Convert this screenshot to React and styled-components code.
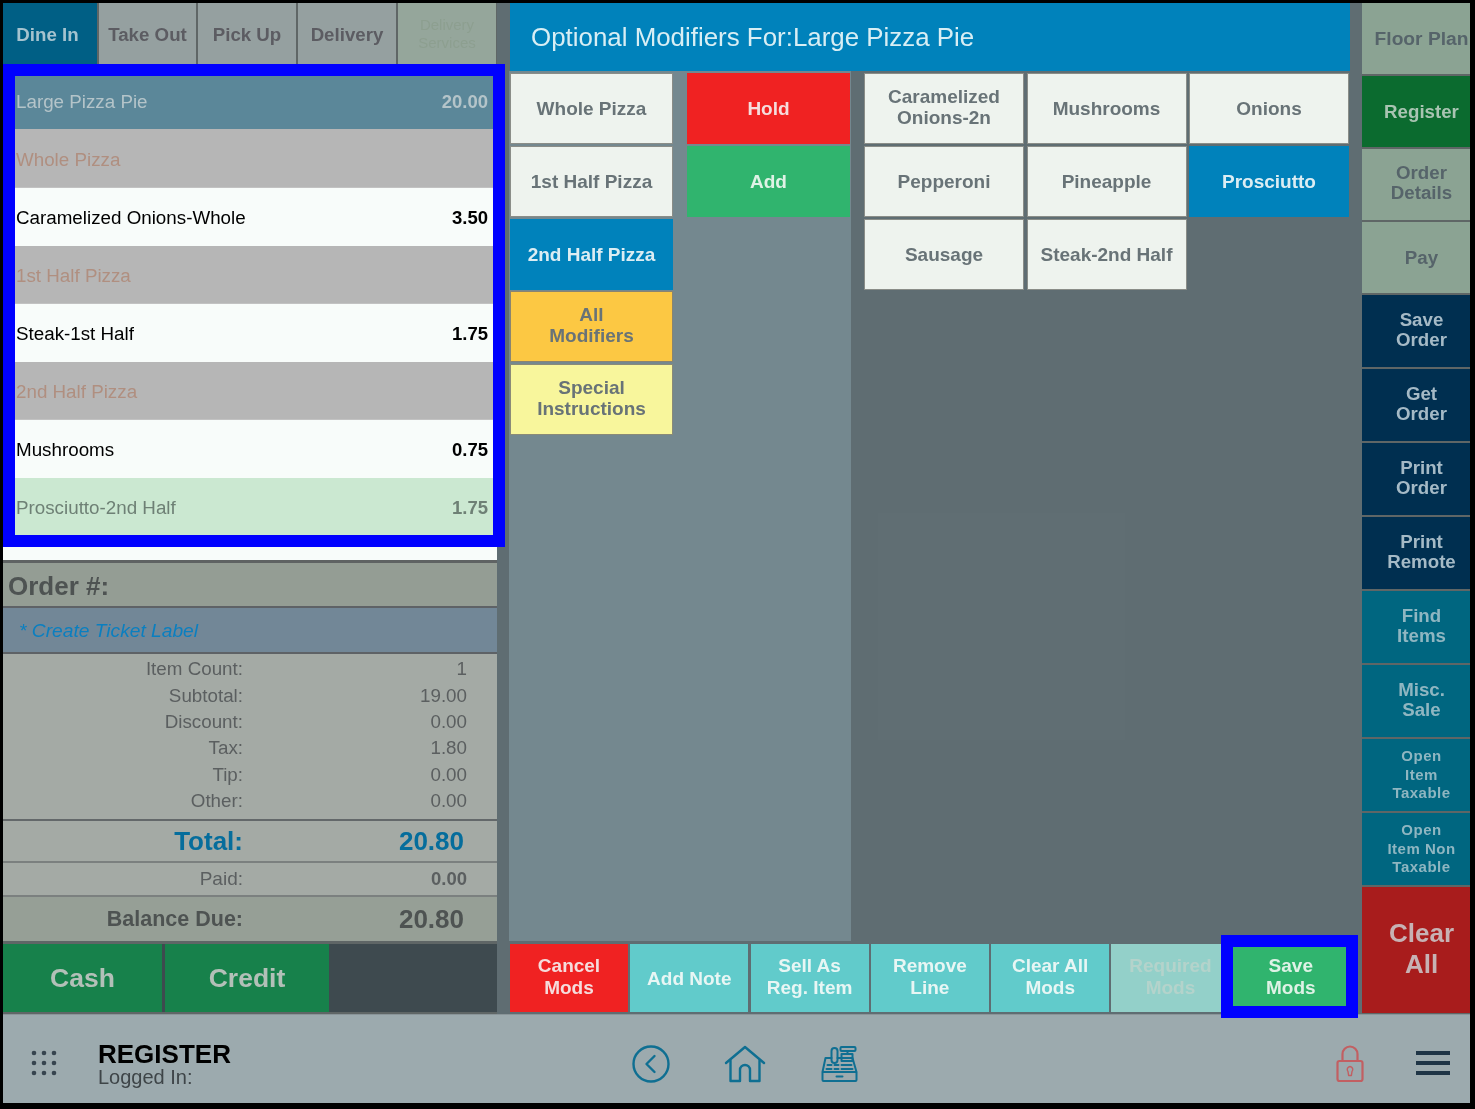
import styled, { createGlobalStyle, css } from "styled-components";

const GlobalStyle = createGlobalStyle`
  html, body {
    margin: 0;
    padding: 0;
    background: #000;
  }
  body {
    font-family: "Liberation Sans", Arial, sans-serif;
  }
  * {
    box-sizing: border-box;
  }
`;

// the whole capture is a bit soft, the highlight frames are not
const soft = css`
  filter: blur(0.45px);
`;

const Screen = styled.div`
  width: 1475px;
  height: 1109px;
  padding: 3px 5px 6px 3px;
  background: #000;
  overflow: hidden;
`;

const Frame = styled.div`
  display: flex;
  flex-direction: column;
  height: 1100px;
`;

const Main = styled.div`
  display: flex;
  height: 1011px;
`;

/* left column */
const LeftCol = styled.div`
  position: relative;
  display: flex;
  flex-direction: column;
  flex: 0 0 494px;
  background: #5f6666;
  z-index: 1;
`;

const Tabs = styled.div`
  display: flex;
  height: 61px;
  gap: 2px;
  background: #5f6666;
`;

const Tab = styled.div`
  flex: 0 0 ${(p) => p.$width || "98px"};
  display: flex;
  align-items: center;
  justify-content: center;
  text-align: center;
  padding-top: ${(p) => (p.$faint ? "0" : "3px")};
  padding-right: ${(p) => (p.$active ? "5px" : "0")};
  font-size: ${(p) => (p.$faint ? "15px" : "18.7px")};
  font-weight: ${(p) => (p.$faint ? 400 : 700)};
  line-height: 18px;
  background: ${(p) => (p.$active ? "#005f85" : p.$faint ? "#95a69b" : "#95a0a0")};
  color: ${(p) => (p.$active ? "#a5c3cf" : p.$faint ? "#8d9f90" : "#5c5c62")};
  ${soft}
`;

const OrderList = styled.div`
  height: 499px;
  padding-top: 12px;
  background: #f8fcfa;
  border-bottom: 3px solid #5f6363;
`;

const ListRow = styled.div`
  display: flex;
  align-items: center;
  justify-content: space-between;
  height: ${(p) => (p.$kind === "head" ? "53px" : p.$kind === "section" && p.$first ? "59px" : "58px")};
  padding: ${(p) => (p.$kind === "head" ? "0" : "3px")} 9px 0 13px;
  font-size: 18.8px;
  border-bottom: 1px solid ${(p) => (p.$kind === "section" ? "#c2c2c2" : "transparent")};
  background: ${(p) =>
    ({ head: "#5b8799", section: "#b6b6b6", sent: "#cbe8d1", item: "#f8fcfa" }[p.$kind])};
  color: ${(p) =>
    ({ head: "#b4c4c9", section: "#b08f80", sent: "#6e8075", item: "#000" }[p.$kind])};
  ${soft}
`;

const Amount = styled.span`
  font-size: 18.5px;
  font-weight: 700;
`;

const BlueFrame = styled.div`
  position: absolute;
  left: 0;
  top: 61px;
  width: 502px;
  height: 483px;
  border: 12px solid #0000ff;
  pointer-events: none;
`;

const OrderNumber = styled.div`
  height: 45px;
  padding: 4px 0 0 5px;
  display: flex;
  align-items: center;
  font-size: 26px;
  font-weight: 700;
  color: #4e5352;
  background: #949d94;
  border-bottom: 2px solid #5e6266;
  ${soft}
`;

const TicketLabel = styled.div`
  height: 46px;
  padding: 2px 0 0 16px;
  display: flex;
  align-items: center;
  font-size: 19.2px;
  font-style: italic;
  color: #0a7fc0;
  background: #728797;
  border-bottom: 2px solid #5e6266;
  ${soft}
`;

const Summary = styled.div`
  height: 167px;
  padding-top: 2px;
  background: #a4aaa5;
  border-bottom: 2px solid #63686a;
  ${soft}
`;

const Line = styled.div`
  display: grid;
  grid-template-columns: 240px 224px;
  align-items: center;
  height: ${(p) => p.$height || "26.4px"};
  font-size: ${(p) => p.$size || "18.8px"};
  font-weight: ${(p) => (p.$bold ? 700 : 400)};
  color: ${(p) => p.$color || "#5b5f60"};
  background: ${(p) => p.$bg || "transparent"};
  border-bottom: ${(p) => (p.$rule ? "2px solid #7b807f" : "none")};
  span {
    text-align: right;
  }
  ${(p) => p.$bg && soft}
`;

const Figure = styled.span`
  padding-right: 3px;
  font-size: ${(p) => p.$size || "26px"};
  font-weight: 700;
`;

const PaidValue = styled.span`
  font-size: 18.5px;
  font-weight: 700;
`;

const Pay = styled.div`
  display: flex;
  gap: 3px;
  height: 68px;
  margin-top: 3px;
  background: #3e4a4f;
`;

const PayButton = styled.div`
  flex: 0 0 ${(p) => p.$width};
  display: flex;
  align-items: center;
  justify-content: center;
  font-size: 26.5px;
  font-weight: 700;
  color: #b3c0b8;
  background: #17814b;
  ${soft}
`;

/* centre */
const Center = styled.div`
  flex: 0 0 865px;
  display: flex;
  flex-direction: column;
  padding: 0 12px 2px 12px;
  background: #5f6d72;
`;

const Header = styled.div`
  flex: 0 0 68px;
  margin-left: 1px;
  padding-left: 21px;
  display: flex;
  align-items: center;
  font-size: 25.9px;
  color: #d8eef4;
  background: #0082bb;
  ${soft}
`;

const Body = styled.div`
  flex: 1;
  position: relative;
  display: flex;
  padding-bottom: 3px;
`;

const GhostPatch = styled.div`
  position: absolute;
  left: 369px;
  top: 442px;
  width: 247px;
  height: 227px;
  background: rgba(255, 255, 255, 0.012);
`;

const ModPanel = styled.div`
  flex: 0 0 342px;
  display: grid;
  grid-template-columns: 163px 163px;
  column-gap: 14px;
  padding: 2px 0 0 1px;
  background: #74888f;
`;

const ModColumn = styled.div`
  display: grid;
  grid-auto-rows: 71px;
  row-gap: 1.75px;
`;

const ItemGrid = styled.div`
  display: grid;
  grid-template-columns: repeat(3, 160px);
  grid-auto-rows: 71px;
  column-gap: 2.5px;
  row-gap: 1.75px;
  align-content: start;
  padding: 2px 0 0 13px;
`;

const tones = {
  plain: { bg: "#eef3ee", fg: "#687377", edge: "#8a8d88" },
  red: { bg: "#f02222", fg: "#f5dcdc", edge: "#f02222" },
  green: { bg: "#30b46e", fg: "#dff2e6", edge: "#30b46e" },
  blue: { bg: "#0082bb", fg: "#dcedf3", edge: "#0082bb" },
  amber: { bg: "#fcc843", fg: "#687377", edge: "#8a8470" },
  yellow: { bg: "#f8f69c", fg: "#687377", edge: "#8a8a78" },
  teal: { bg: "#61cbcb", fg: "#e8f6f4", edge: "#61cbcb" },
  muted: { bg: "#93d0c9", fg: "#b4d3cb", edge: "#93d0c9" },
};

const ModButton = styled.div`
  display: flex;
  align-items: center;
  justify-content: center;
  text-align: center;
  white-space: pre-line;
  padding: ${(p) => (p.$stacked ? "0 0 3px" : "1px 0 0")};
  font-size: 19px;
  font-weight: 700;
  line-height: 21.5px;
  color: ${(p) => tones[p.$tone || "plain"].fg};
  background: ${(p) => tones[p.$tone || "plain"].bg};
  border: 1px solid ${(p) => tones[p.$tone || "plain"].edge};
  ${soft}
`;

const ActionBar = styled.div`
  position: relative;
  flex: 0 0 68px;
  margin-left: 1px;
  display: grid;
  grid-template-columns: repeat(7, 118px);
  column-gap: 2.3px;
  z-index: 2;
`;

const ActionButton = styled(ModButton)`
  border: 0;
`;

const SaveFrame = styled.div`
  position: absolute;
  left: 711px;
  top: -9px;
  width: 137px;
  height: 83px;
  border: 12px solid #0000ff;
  pointer-events: none;
`;

/* right column */
const RightCol = styled.div`
  flex: 0 0 108px;
  display: grid;
  grid-template-rows: repeat(4, 71px) repeat(8, 72px) 1fr;
  row-gap: 2px;
  padding-bottom: 1px;
  background: #5f6666;
`;

const sideTones = {
  sage: { bg: "#8ba393", fg: "#56646a" },
  green: { bg: "#0b6b2f", fg: "#a9c4b2" },
  navy: { bg: "#002f50", fg: "#a5bac6" },
  teal: { bg: "#006680", fg: "#8fb6c1" },
  red: { bg: "#a81c1c", fg: "#c7b2b4" },
};

const SideButton = styled.div`
  display: flex;
  align-items: center;
  justify-content: center;
  text-align: center;
  white-space: pre;
  overflow: hidden;
  padding: 0 0 ${(p) => p.$lift || "0"} 11px;
  font-size: ${(p) => p.$size || "18.7px"};
  font-weight: 700;
  line-height: ${(p) => p.$leading || "20px"};
  letter-spacing: ${(p) => p.$track || "0"};
  color: ${(p) => sideTones[p.$tone].fg};
  background: ${(p) => sideTones[p.$tone].bg};
  ${soft}
`;

/* bottom bar */
const BottomBar = styled.div`
  flex: 1;
  display: flex;
  align-items: center;
  padding: 10px 0 0 28px;
  background: #9caaae;
  border-top: 1px solid #8a9599;
  ${soft}
`;

const Dots = styled.svg`
  flex: 0 0 26px;
  height: 26px;
  margin-top: -2px;
  fill: #36444f;
`;

const Title = styled.div`
  margin-left: 41px;
  width: 534px;
`;

const TitleMain = styled.div`
  font-size: 26px;
  font-weight: 700;
  line-height: 26px;
  color: #000;
`;

const TitleSub = styled.div`
  font-size: 20px;
  line-height: 20px;
  color: #3e4548;
`;

const Nav = styled.div`
  display: flex;
  align-items: center;
  gap: 54px;
`;

const NavIcon = styled.svg`
  display: block;
  fill: none;
  stroke: ${(p) => p.$stroke || "#0f6f92"};
  stroke-width: ${(p) => p.$weight || 2.4};
  stroke-linecap: round;
  stroke-linejoin: round;
`;

const Spacer = styled.div`
  flex: 1;
`;

const Burger = styled.div`
  display: flex;
  flex-direction: column;
  gap: 6px;
  width: 34px;
  margin: -2px 20px 0 52px;
  span {
    height: 4px;
    background: #1f3546;
  }
`;

const modColumnOne = [
  ["Whole Pizza"],
  ["1st Half Pizza"],
  ["2nd Half Pizza", "blue"],
  ["All\nModifiers", "amber"],
  ["Special\nInstructions", "yellow"],
];

const items = [
  ["Caramelized\nOnions-2n"],
  ["Mushrooms"],
  ["Onions"],
  ["Pepperoni"],
  ["Pineapple"],
  ["Prosciutto", "blue"],
  ["Sausage"],
  ["Steak-2nd Half"],
];

const actions = [
  ["Cancel\nMods", "red"],
  ["Add Note", "teal"],
  ["Sell As\nReg. Item", "teal"],
  ["Remove\nLine", "teal"],
  ["Clear All\nMods", "teal"],
  ["Required\nMods", "muted"],
  ["Save\nMods", "green"],
];

const side = [
  ["Floor Plan", "sage"],
  ["Register", "green"],
  ["Order\nDetails", "sage"],
  ["Pay", "sage"],
  ["Save\nOrder", "navy"],
  ["Get\nOrder", "navy"],
  ["Print\nOrder", "navy"],
  ["Print\nRemote", "navy"],
  ["Find\nItems", "teal"],
  ["Misc.\nSale", "teal"],
];

const orderRows = [
  ["Large Pizza Pie", "20.00", "head"],
  ["Whole Pizza", "", "section"],
  ["Caramelized Onions-Whole", "3.50", "item"],
  ["1st Half Pizza", "", "section"],
  ["Steak-1st Half", "1.75", "item"],
  ["2nd Half Pizza", "", "section"],
  ["Mushrooms", "0.75", "item"],
  ["Prosciutto-2nd Half", "1.75", "sent"],
];

const totals = [
  ["Item Count:", "1"],
  ["Subtotal:", "19.00"],
  ["Discount:", "0.00"],
  ["Tax:", "1.80"],
  ["Tip:", "0.00"],
  ["Other:", "0.00"],
];

function App() {
  return (
    <>
      <GlobalStyle />
      <Screen>
        <Frame>
          <Main>
            <LeftCol>
              <Tabs>
                <Tab $width="94px" $active>Dine In</Tab>
                <Tab $width="97px">Take Out</Tab>
                <Tab>Pick Up</Tab>
                <Tab>Delivery</Tab>
                <Tab $faint>Delivery Services</Tab>
              </Tabs>
              <OrderList>
                {orderRows.map(([name, price, kind], i) => (
                  <ListRow key={name} $kind={kind} $first={i === 1}>
                    <span>{name}</span>
                    <Amount>{price}</Amount>
                  </ListRow>
                ))}
              </OrderList>
              <OrderNumber>Order #:</OrderNumber>
              <TicketLabel>* Create Ticket Label</TicketLabel>
              <Summary>
                {totals.map(([label, value]) => (
                  <Line key={label}>
                    <span>{label}</span>
                    <span>{value}</span>
                  </Line>
                ))}
              </Summary>
              <Line $height="42px" $size="26px" $bold $color="#056d9c" $bg="#a4aaa5" $rule>
                <span>Total:</span>
                <Figure>20.80</Figure>
              </Line>
              <Line $height="34px" $size="19px" $bg="#a4aaa5" $rule>
                <span>Paid:</span>
                <PaidValue>0.00</PaidValue>
              </Line>
              <Line $height="44px" $size="21.5px" $bold $color="#4e5352" $bg="#969f96">
                <span>Balance Due:</span>
                <Figure>20.80</Figure>
              </Line>
              <Pay>
                <PayButton $width="159px">Cash</PayButton>
                <PayButton $width="164px">Credit</PayButton>
              </Pay>
              <BlueFrame />
            </LeftCol>

            <Center>
              <Header>Optional Modifiers For:Large Pizza Pie</Header>
              <Body>
                <ModPanel>
                  <ModColumn>
                    {modColumnOne.map(([label, tone]) => (
                      <ModButton key={label} $tone={tone} $stacked={label.includes("\n")}>
                        {label}
                      </ModButton>
                    ))}
                  </ModColumn>
                  <ModColumn>
                    <ModButton $tone="red">Hold</ModButton>
                    <ModButton $tone="green">Add</ModButton>
                  </ModColumn>
                </ModPanel>
                <ItemGrid>
                  {items.map(([label, tone]) => (
                    <ModButton key={label} $tone={tone} $stacked={label.includes("\n")}>
                      {label}
                    </ModButton>
                  ))}
                </ItemGrid>
                <GhostPatch />
              </Body>
              <ActionBar>
                {actions.map(([label, tone]) => (
                  <ActionButton key={label} $tone={tone} $stacked={label.includes("\n")}>
                    {label}
                  </ActionButton>
                ))}
                <SaveFrame />
              </ActionBar>
            </Center>

            <RightCol>
              {side.map(([label, tone]) => (
                <SideButton
                  key={label}
                  $tone={tone}
                  $size={label === "Floor Plan" ? "19.2px" : undefined}
                  $lift={label.includes("\n") ? "3px" : "0"}
                >
                  {label}
                </SideButton>
              ))}
              <SideButton $tone="teal" $size="15px" $leading="18.5px" $track="0.5px">
                {"Open\nItem\nTaxable"}
              </SideButton>
              <SideButton $tone="teal" $size="15px" $leading="18.5px" $track="0.5px">
                {"Open\nItem Non\nTaxable"}
              </SideButton>
              <SideButton $tone="red" $size="26px" $leading="31px" $lift="2px">
                {"Clear\nAll"}
              </SideButton>
            </RightCol>
          </Main>

          <BottomBar>
            <Dots viewBox="0 0 26 26">
              {[3, 13, 23].flatMap((y) =>
                [3, 13, 23].map((x) => <circle key={`${x}-${y}`} cx={x} cy={y} r="2.3" />)
              )}
            </Dots>
            <Title>
              <TitleMain>REGISTER</TitleMain>
              <TitleSub>Logged In:</TitleSub>
            </Title>
            <Nav>
              <NavIcon width="38" height="38" viewBox="0 0 38 38">
                <circle cx="19" cy="19" r="17.5" />
                <path d="M22.5 11 L14.5 19 L22.5 27" />
              </NavIcon>
              <NavIcon width="42" height="38" viewBox="0 0 42 38">
                <path d="M2 18 L21 2 L40 18" />
                <path d="M6.5 15.5 V36 H16 V25 a5 5 0 0 1 10 0 V36 H35.5 V15.5" />
              </NavIcon>
              <NavIcon width="38" height="38" viewBox="-1.5 0 38 38" $weight={2}>
                <rect x="1" y="27" width="34" height="9" rx="1" />
                <path d="M1 27 L4 13 H10 M16 13 H31 L35 27" />
                <rect x="10" y="3" width="6" height="15" rx="3" />
                <rect x="19" y="2" width="15" height="4" rx="1" />
                <path d="M26 6 V9" />
                <rect x="20" y="9" width="11" height="7" />
                <path d="M6 20 H10 M13 20 H17 M20 20 H30 M5 24 H10 M13 24 H17 M20 24 H31 M15 31.5 H21" />
              </NavIcon>
            </Nav>
            <Spacer />
            <NavIcon width="28" height="38" viewBox="0 0 28 38" $stroke="#c25f62" $weight={2.2}>
              <path d="M6.5 16 V9 a7.5 7.5 0 0 1 15 0 V16" />
              <rect x="1.5" y="16" width="25" height="20" rx="2" />
              <path d="M14 21.5 a3 3 0 0 1 2 5 l-.6 4 h-2.8 l-.6 -4 a3 3 0 0 1 2 -5 z" strokeWidth="1.4" />
            </NavIcon>
            <Burger>
              <span />
              <span />
              <span />
            </Burger>
          </BottomBar>
        </Frame>
      </Screen>
    </>
  );
}

export default App;
